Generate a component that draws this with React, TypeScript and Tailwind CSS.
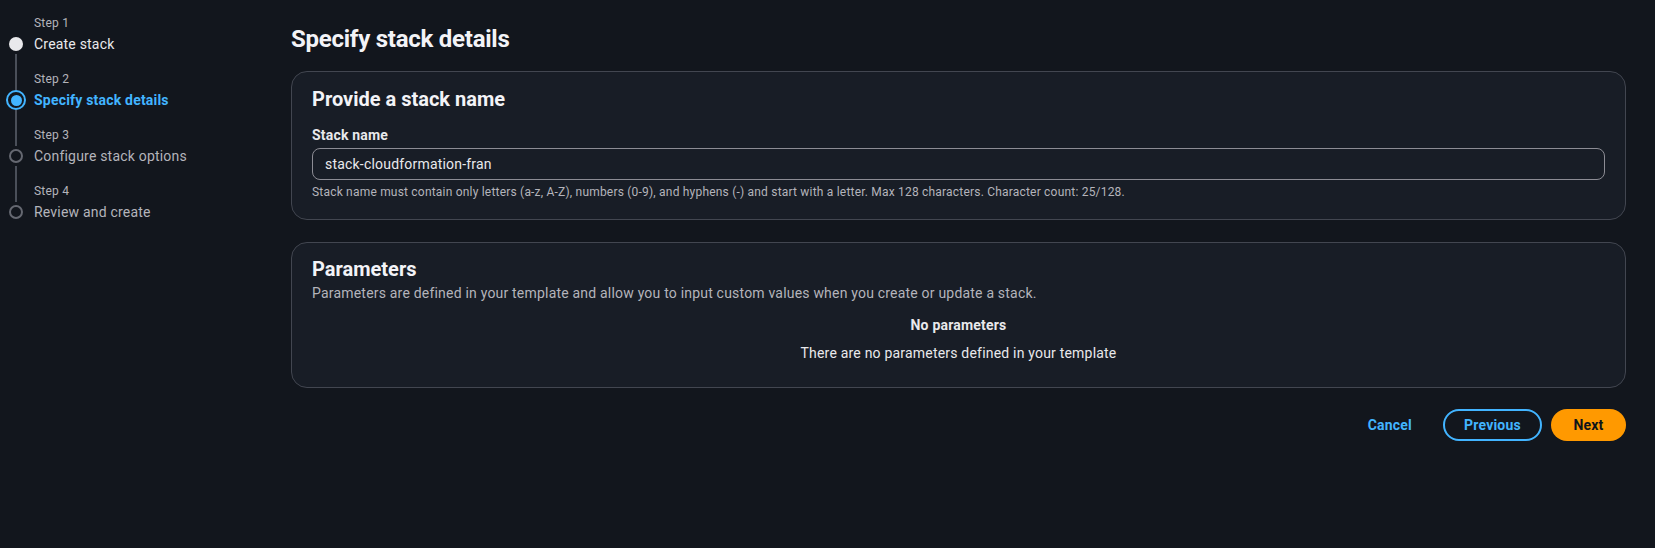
import React from "react";

type StepState = "done" | "active" | "todo";

const steps: { label: string; title: string; state: StepState }[] = [
  { label: "Step 1", title: "Create stack", state: "done" },
  { label: "Step 2", title: "Specify stack details", state: "active" },
  { label: "Step 3", title: "Configure stack options", state: "todo" },
  { label: "Step 4", title: "Review and create", state: "todo" },
];

function StepDot({ state }: { state: StepState }) {
  if (state === "done") {
    return <span className="block w-[14px] h-[14px] rounded-full bg-[#e9e9ec]" />;
  }
  if (state === "active") {
    return (
      <span className="flex items-center justify-center w-[20px] h-[20px] rounded-full border-2 border-[#42b4ff]">
        <span className="block w-[11px] h-[11px] rounded-full bg-[#42b4ff]" />
      </span>
    );
  }
  return <span className="block w-[14px] h-[14px] rounded-full border-2 border-[#656871]" />;
}

function Wizard() {
  return (
    <nav className="w-[291px] shrink-0 pt-[15px] pl-[6px]">
      {steps.map((s, i) => (
        <div key={s.title} className="flex">
          {/* rail */}
          <div className="w-[20px] flex flex-col items-center">
            <div className={`w-[2px] h-[19px] ${i === 0 ? "" : "bg-[#4a4f59]"}`} />
            <div className="h-[20px] flex items-center">
              <StepDot state={s.state} />
            </div>
            <div className={`w-[2px] flex-1 ${i === steps.length - 1 ? "" : "bg-[#4a4f59]"}`} />
          </div>
          <div className="pl-[8px] pb-[17px]">
            <div className="text-[12px] leading-[16px] text-[#b4b4bb] mb-[3px]">{s.label}</div>
            <div
              className={`text-[14px] leading-[20px] ${
                s.state === "active"
                  ? "font-bold text-[#42b4ff]"
                  : s.state === "done"
                  ? "text-[#e9e9ec]"
                  : "text-[#b4b4bb]"
              }`}
            >
              {s.title}
            </div>
          </div>
        </div>
      ))}
    </nav>
  );
}

function Card({ children, className = "" }: { children: React.ReactNode; className?: string }) {
  return (
    <section className={`rounded-[16px] border border-[#424650] bg-[#181d26] px-[20px] ${className}`}>
      {children}
    </section>
  );
}

export default function App() {
  return (
    <div
      className="w-full h-[548px] flex bg-[#12161d] text-[#dedee3] tracking-[0.2px]"
      style={{ fontFamily: "Roboto, 'Liberation Sans', sans-serif" }}
    >
      <Wizard />

      <main className="flex-1 pr-[29px] pt-[24px]">
        <h1 className="text-[24px] leading-[30px] font-bold tracking-[-0.25px] text-[#f3f3f7]">
          Specify stack details
        </h1>

        {/* Stack name */}
        <Card className="mt-[17px] pt-[15px] pb-[19px]">
          <h2 className="text-[20px] leading-[24px] font-bold tracking-normal text-[#f3f3f7]">
            Provide a stack name
          </h2>
          <label className="block mt-[14px] text-[14px] leading-[20px] font-bold text-[#e9e9ec]">
            Stack name
          </label>
          <div className="mt-[3px] h-[32px] rounded-[8px] border border-[#8c8c94] flex items-center px-[12px] text-[14px] text-[#e9e9ec]">
            stack-cloudformation-fran
          </div>
          <p className="mt-[4px] text-[12px] leading-[16px] text-[#b4b4bb]">
            Stack name must contain only letters (a-z, A-Z), numbers (0-9), and hyphens (-) and start with a
            letter. Max 128 characters. Character count: 25/128.
          </p>
        </Card>

        {/* Parameters */}
        <Card className="mt-[22px] pt-[14px] pb-[24px]">
          <h2 className="text-[20px] leading-[24px] font-bold tracking-normal text-[#f3f3f7]">Parameters</h2>
          <p className="mt-[2px] text-[14px] leading-[20px] text-[#b4b4bb]">
            Parameters are defined in your template and allow you to input custom values when you create or update
            a stack.
          </p>
          <div className="mt-[12px] text-center text-[14px] leading-[20px]">
            <div className="font-bold text-[#e9e9ec]">No parameters</div>
            <div className="mt-[8px] text-[#e9e9ec]">There are no parameters defined in your template</div>
          </div>
        </Card>

        {/* Actions */}
        <div className="mt-[21px] flex justify-end items-center">
          <button className="h-[32px] px-[16px] text-[14px] font-bold text-[#42b4ff]">Cancel</button>
          <button className="ml-[15px] h-[32px] w-[99px] rounded-full border-2 border-[#42b4ff] text-[14px] font-bold text-[#42b4ff]">
            Previous
          </button>
          <button className="ml-[9px] h-[32px] w-[75px] rounded-full bg-[#ff9900] text-[14px] font-bold text-[#0f141a]">
            Next
          </button>
        </div>
      </main>
    </div>
  );
}
